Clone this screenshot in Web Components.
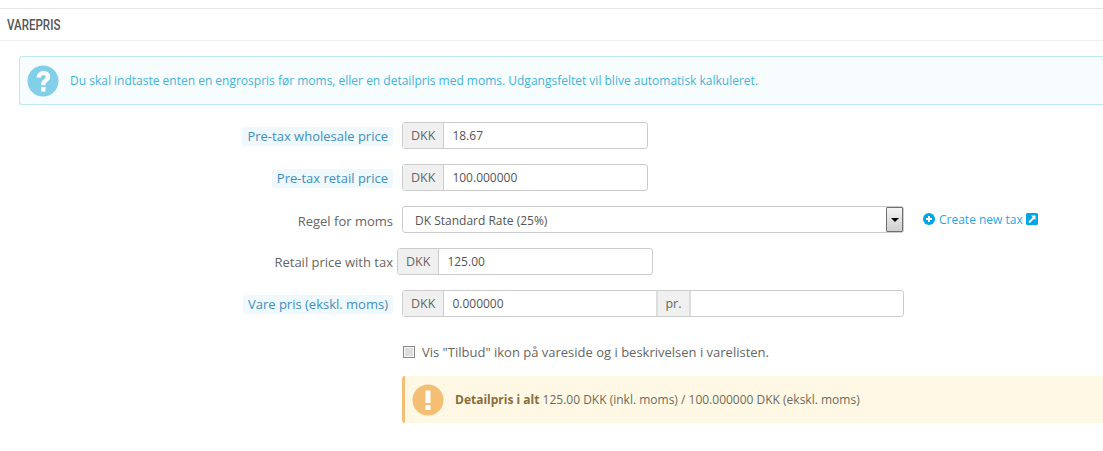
<!DOCTYPE html>
<html>
<head>
<meta charset="utf-8">
<title>Varepris</title>
<style>
html, body { margin: 0; background: #fff; overflow: hidden; }
body { font: 13px "Open Sans", sans-serif; color: #555; }
</style>
</head>
<body>
<price-panel>
  <span slot="heading">Varepris</span>
  <note-box kind="info">Du skal indtaste enten en engrospris før moms, eller en detailpris med moms. Udgangsfeltet vil blive automatisk kalkuleret.</note-box>
  <form-row label="Pre-tax wholesale price" hint><money-field width="246" value="18.67"></money-field></form-row>
  <form-row label="Pre-tax retail price" hint><money-field width="246" value="100.000000"></money-field></form-row>
  <form-row label="Regel for moms" low>
    <tax-select value="DK Standard Rate (25%)"></tax-select>
    <new-tax-link>Create new tax</new-tax-link>
  </form-row>
  <form-row label="Retail price with tax" pull><money-field width="256" value="125.00"></money-field></form-row>
  <form-row label="Vare pris (ekskl. moms)" hint><money-field width="502" value="0.000000" split="254" unit="pr."></money-field></form-row>
  <check-row>Vis "Tilbud" ikon på vareside og i beskrivelsen i varelisten.</check-row>
  <note-box kind="warn"><b>Detailpris i alt</b> 125.00 DKK (inkl. moms) / 100.000000 DKK (ekskl. moms)</note-box>
</price-panel>

<script>
class PricePanel extends HTMLElement {
  constructor() {
    super()
    this.attachShadow({ mode: "open" }).innerHTML = `
    <style>
      :host { display: block; padding-top: 8px; }
      h3 {
        margin: 0;
        height: 31px;
        padding-left: 7px;
        border-top: 1px solid #e6e6e6;
        border-bottom: 1px solid #eee;
        font: 500 15px/32px "Roboto", sans-serif;
        text-transform: uppercase;
        color: #555;
      }
      h3 span { display: inline-block; transform: scaleX(.77); transform-origin: 0 50%; }
      .body { display: flex; flex-direction: column; padding-top: 15px; }
    </style>
    <h3><span><slot name="heading"></slot></span></h3>
    <div class="body"><slot></slot></div>`
  }
}

class NoteBox extends HTMLElement {
  constructor() {
    super()
    const info = this.getAttribute("kind") === "info"
    const mark = info
      ? `<circle cx="16" cy="16" r="15.5" fill="#81cfe9"/>
         <path d="M9.6 12.4c.4-4 3.1-6.4 6.9-6.4 4 0 6.800 2.400 6.800 5.800 0 2.600-1.400 3.900-3 5-1.300.9-1.800 1.500-1.800 2.700v.7h-4.400v-1.200c0-2.200.9-3.400 2.600-4.600 1.300-.9 2-1.500 2-2.500 0-1.100-.9-1.900-2.200-1.900-1.500 0-2.400 1-2.600 2.700z" fill="#fff"/>
         <rect x="14.100" y="22" width="4.400" height="4.600" fill="#fff"/>`
      : `<circle cx="16" cy="16" r="15.500" fill="#f5be75"/>
         <rect x="13.500" y="6.500" width="5" height="12.500" fill="#fff"/>
         <rect x="13.500" y="21" width="5" height="5" fill="#fff"/>`
    this.attachShadow({ mode: "open" }).innerHTML = `
    <style>
      :host { display: block; }
      :host([kind=info]) { margin-bottom: 2px; }
      .box { display: flex; align-items: center; box-sizing: border-box; }
      .info {
        margin-left: 19px;
        height: 49px;
        padding-left: 7px;
        background: #f7fcfe;
        border: 1px solid #bfe8f4;
        border-right: 0;
        border-radius: 3px 0 0 3px;
        color: #3fb4db;
        font-size: 12px;
      }
      .warn {
        margin-left: 402px;
        height: 47px;
        padding-left: 7px;
        background: #fef8e5;
        border-left: 3px solid #f5be75;
        border-radius: 3px 0 0 3px;
        color: #6f6a5c;
        font-size: 12px;
      }
      svg { width: 32px; height: 32px; flex: none; margin-right: 11px; }
      ::slotted(b) { color: #8a6d3b; }
    </style>
    <div class="box ${info ? "info" : "warn"}">
      <svg viewBox="0 0 32 32">${mark}</svg>
      <span><slot></slot></span>
    </div>`
  }
}

class FormRow extends HTMLElement {
  constructor() {
    super()
    const hint = this.hasAttribute("hint")
    this.attachShadow({ mode: "open" }).innerHTML = `
    <style>
      :host { display: flex; align-items: center; height: 27px; margin-top: 15px; }
      .label { width: 393px; flex: none; display: flex; justify-content: flex-end; padding-top: 2px; }
      :host([low]) .label { padding-top: 3px; }
      .text { font-size: 13px; line-height: 19px; color: #666; white-space: nowrap; }
      .hint { background: #eff8fc; color: #3f8fbd; padding: 0 5px; border-radius: 3px; }
      .controls { display: flex; align-items: center; margin-left: 9px; }
      :host([pull]) .controls { margin-left: 4px; }
    </style>
    <div class="label"><span class="text ${hint ? "hint" : ""}">${this.getAttribute("label")}</span></div>
    <div class="controls"><slot></slot></div>`
  }
}

class MoneyField extends HTMLElement {
  constructor() {
    super()
    const width = this.getAttribute("width")
    const split = this.getAttribute("split")
    const unit = this.getAttribute("unit")
    const value = this.getAttribute("value")
    this.attachShadow({ mode: "open" }).innerHTML = `
    <style>
      :host { display: block; }
      .group {
        display: flex;
        box-sizing: border-box;
        height: 27px;
        border: 1px solid #ccc;
        border-radius: 3px;
        font-size: 12px;
        line-height: 25px;
        color: #555;
      }
      .add { background: #f0f0f0; border-right: 1px solid #ccc; padding: 0 8px; flex: none; color: #666; font-size: 12.5px; }
      .val { padding-left: 8px; flex: 1; color: #555; }
      .sep { border-left: 2px solid #ddd; border-right: 2px solid #ddd; padding: 0 8px 0 7px; }
    </style>
    <div class="group" style="width:${width}px">
      <div class="add">DKK</div>
      <div class="val" ${split ? `style="flex:none;width:${split - 50}px"` : ""}>${value}</div>
      ${unit ? `<div class="add sep">${unit}</div><div class="val"></div>` : ""}
    </div>`
  }
}

class TaxSelect extends HTMLElement {
  constructor() {
    super()
    this.attachShadow({ mode: "open" }).innerHTML = `
    <style>
      :host { display: block; }
      .sel {
        display: flex;
        justify-content: space-between;
        box-sizing: border-box;
        width: 502px;
        height: 27px;
        border: 1px solid #ccc;
        border-radius: 3px;
        padding-left: 12px;
        font-size: 12px;
        line-height: 27px;
        color: #555;
      }
      .arrow {
        box-sizing: border-box;
        width: 17px;
        height: 25px;
        border: 1px solid #707070;
        border-radius: 1px;
        background: linear-gradient(#f4f4f4, #cfcfcf);
        display: flex;
        align-items: center;
        justify-content: center;
      }
      .arrow i {
        width: 0;
        height: 0;
        border-left: 4px solid transparent;
        border-right: 4px solid transparent;
        border-top: 4px solid #000;
      }
    </style>
    <div class="sel"><span>${this.getAttribute("value")}</span><div class="arrow"><i></i></div></div>`
  }
}

class NewTaxLink extends HTMLElement {
  constructor() {
    super()
    this.attachShadow({ mode: "open" }).innerHTML = `
    <style>
      :host { display: flex; align-items: center; margin-left: 19px; margin-top: -1px; color: #25a9e0; font-size: 12px; white-space: nowrap; }
      svg { flex: none; }
      .plus { width: 12px; height: 12px; margin-right: 4px; }
      .out { width: 12px; height: 12px; margin-left: 3px; }
    </style>
    <svg class="plus" viewBox="0 0 12 12"><circle cx="6" cy="6" r="6" fill="#00a4e7"/><path d="M6 3v6M3 6h6" stroke="#fff" stroke-width="2"/></svg>
    <slot></slot>
    <svg class="out" viewBox="0 0 12 12"><rect width="12" height="12" rx="1.500" fill="#00a4e7"/><path d="M3 9.500L8 4.500" stroke="#fff" stroke-width="2"/><path d="M5 2.500h4.500V7z" fill="#fff"/></svg>`
  }
}

class CheckRow extends HTMLElement {
  constructor() {
    super()
    this.attachShadow({ mode: "open" }).innerHTML = `
    <style>
      :host { display: flex; align-items: center; height: 20px; margin: 25px 0 14px 403px; font-size: 13px; color: #666; white-space: nowrap; }
      .box {
        box-sizing: border-box;
        width: 12px;
        height: 12px;
        margin-right: 7px;
        border: 1px solid #8a8a8a;
        background: #dedede;
        box-shadow: inset 0 0 0 1px #f4f4f4;
      }
    </style>
    <span class="box"></span><slot></slot>`
  }
}

customElements.define("price-panel", PricePanel)
customElements.define("note-box", NoteBox)
customElements.define("form-row", FormRow)
customElements.define("money-field", MoneyField)
customElements.define("tax-select", TaxSelect)
customElements.define("new-tax-link", NewTaxLink)
customElements.define("check-row", CheckRow)
</script>
</body>
</html>
